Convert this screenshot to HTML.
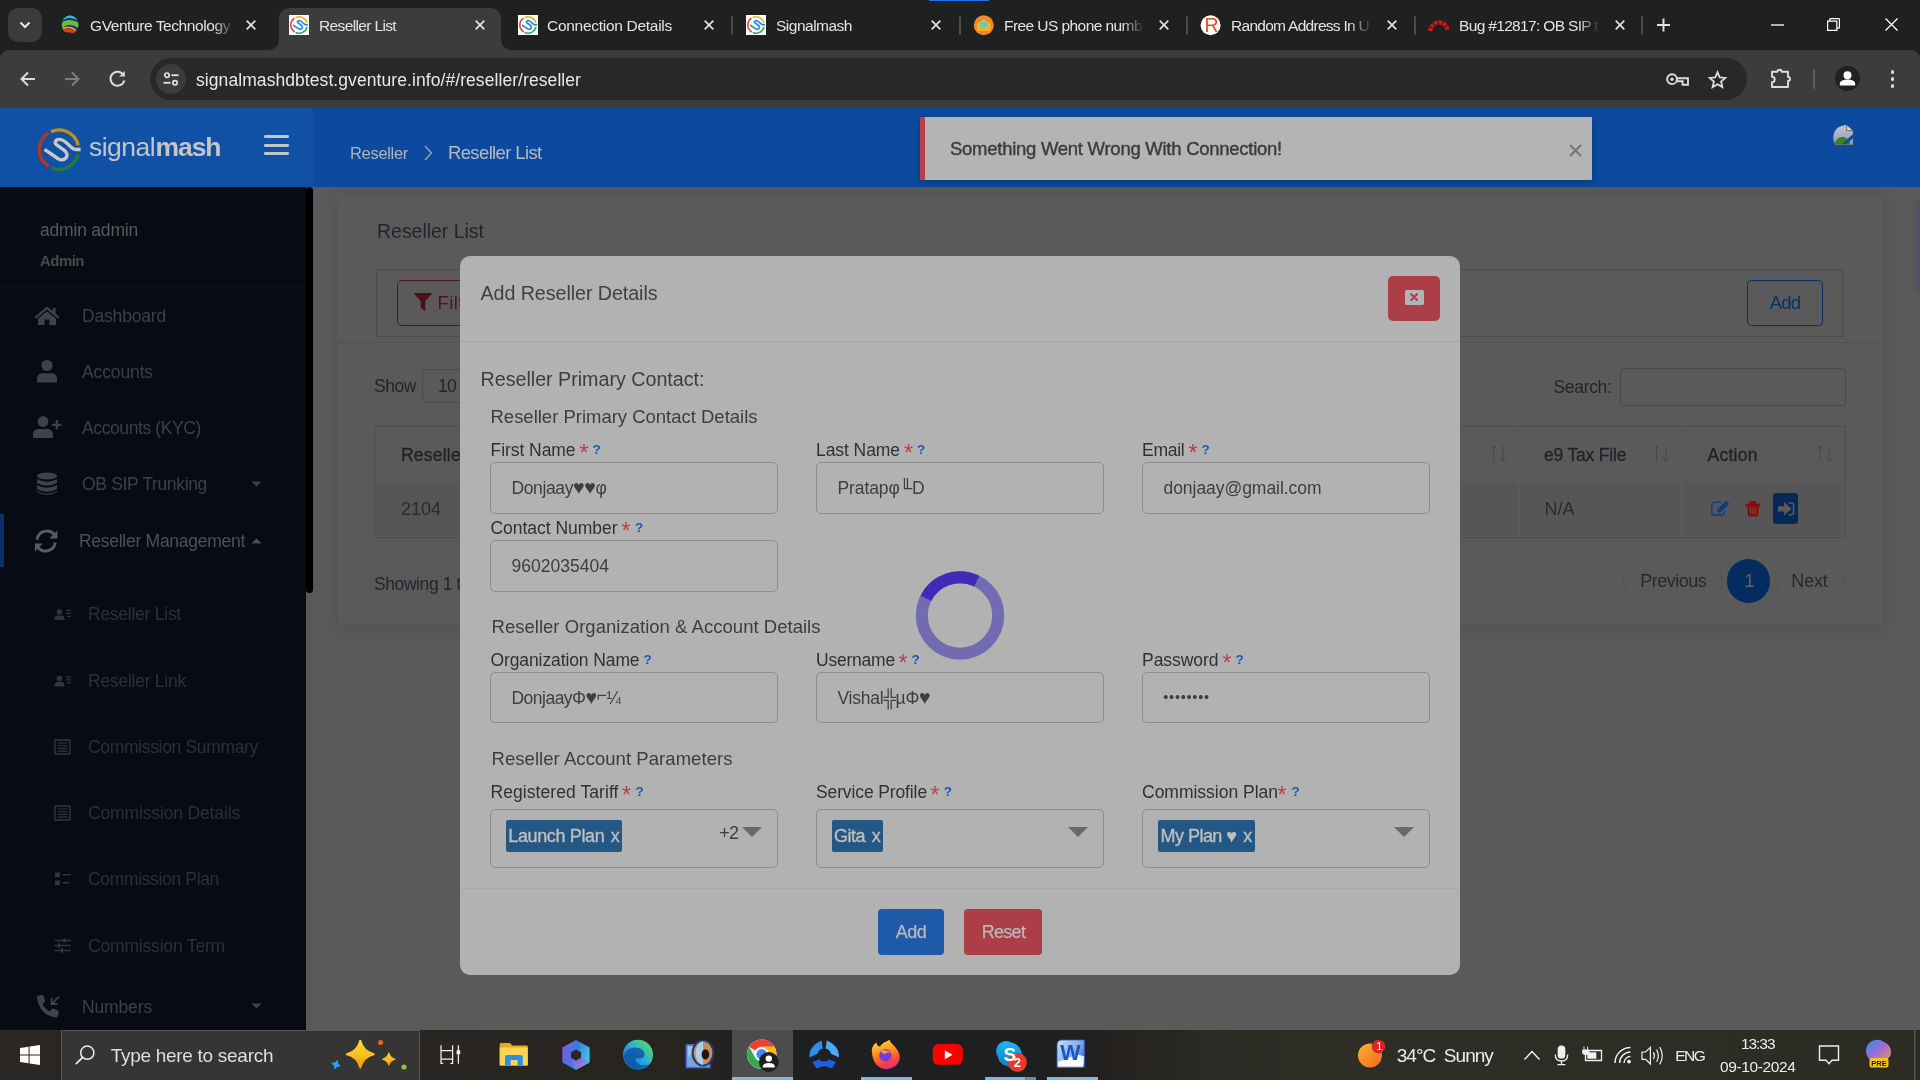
<!DOCTYPE html>
<html lang="en"><head><meta charset="utf-8"><title>Reseller List</title>
<style>
html,body{margin:0;padding:0;}
body{width:1920px;height:1080px;overflow:hidden;position:relative;background:#595959;font-family:"Liberation Sans",sans-serif;}
div,span.t,svg{position:absolute;box-sizing:border-box;}
span.t{white-space:pre;line-height:1;}
svg{overflow:visible;}
#root{left:0;top:0;width:1920px;height:1080px;will-change:transform;}
</style></head>
<body>
<div id="root">
<div style="left:313px;top:187px;width:1607px;height:843px;background:#5a5a5a;"></div>
<div style="left:337px;top:194px;width:1546px;height:431px;background:#5a5a5a;border-radius:3px;box-shadow:0 3px 16px 2px rgba(0,0,0,0.09);"></div>
<span id="t1" class="t" style="left:377px;top:222px;font-size:19.5px;color:#1f242d;letter-spacing:-0.023px;">Reseller List</span>
<div style="left:1918.4px;top:202px;width:4px;height:90px;background:#48526c;border-radius:3px 0 0 3px;box-shadow:0 0 9px 1px rgba(0,0,0,0.14);"></div>
<div style="left:376px;top:269px;width:1467px;height:68px;border:1px solid #4c4c4c;"></div>
<div style="left:397px;top:279.5px;width:120px;height:46.5px;border:1.3px solid #561319;border-radius:5px;"></div>
<svg style="left:414.4px;top:292.9px;" width="18" height="18.2" viewBox="0 0 18 18.2"><path d="M0.4 0 H17.6 Q18.2 0.6 17.6 1.2 L11.3 8 V18.2 L6.6 14.6 V8 L0.4 1.2 Q-0.2 0.6 0.4 0Z" fill="#4e1018"/></svg>
<span id="t2" class="t" style="left:437.4px;top:294px;font-size:18.5px;color:#541219;letter-spacing:0.479px;">Filter</span>
<div style="left:1747px;top:279.8px;width:76.2px;height:46.2px;border:1.3px solid #062f66;border-radius:4.5px;"></div>
<span id="t3" class="t" style="left:1769.7px;top:294px;font-size:18.5px;color:#07306a;letter-spacing:-0.774px;">Add</span>
<div style="left:337px;top:341.5px;width:1546px;height:1px;background:#505050;"></div>
<span id="t4" class="t" style="left:374px;top:378px;font-size:17.5px;color:#1f242d;letter-spacing:-0.445px;">Show</span>
<div style="left:421.5px;top:368.5px;width:90px;height:34px;border:1px solid #4b4b4b;border-radius:4px;"></div>
<span id="t5" class="t" style="left:438px;top:378px;font-size:17.5px;color:#1f242d;letter-spacing:-0.734px;">10</span>
<span id="t6" class="t" style="left:1553.5px;top:379px;font-size:17.5px;color:#1f242d;letter-spacing:-0.330px;">Search:</span>
<div style="left:1620px;top:368px;width:226px;height:38px;border:1px solid #494949;border-radius:4px;"></div>
<div style="left:374px;top:425.5px;width:1472px;height:112px;border:1px solid #4f4f4f;"></div>
<div style="left:376px;top:482px;width:1084px;height:53.5px;background:#565656;"></div>
<div style="left:1460px;top:482px;width:57.5px;height:53.5px;background:#565656;"></div>
<div style="left:1520px;top:482px;width:160px;height:53.5px;background:#565656;"></div>
<div style="left:1682.5px;top:482px;width:161px;height:53.5px;background:#565656;"></div>
<div style="left:1517.3px;top:428px;width:1px;height:52px;background:#565656;"></div>
<div style="left:1680px;top:428px;width:1px;height:52px;background:#565656;"></div>
<span id="t7" class="t" style="left:401px;top:447px;font-size:17.5px;color:#1f2228;letter-spacing:0.225px;-webkit-text-stroke:0.3px #1f2228;">Reseller</span>
<span id="t8" class="t" style="left:1543.9px;top:447px;font-size:17.5px;color:#1f2228;letter-spacing:-0.165px;-webkit-text-stroke:0.3px #1f2228;">e9 Tax File</span>
<span id="t9" class="t" style="left:1707.6px;top:447px;font-size:17.5px;color:#1f2228;letter-spacing:0.227px;-webkit-text-stroke:0.3px #1f2228;">Action</span>
<svg style="left:1490px;top:444.5px;" width="17" height="17" viewBox="0 0 17 17"><path d="M3.6 16.5 V0.8 M0.4 4.4 L3.6 0.8 L6.8 4.4 M13 0.5 V16.2 M9.8 12.6 L13 16.2 L16.2 12.6" stroke="#484848" stroke-width="1" fill="none"/></svg>
<svg style="left:1653.3px;top:444.5px;" width="17" height="17" viewBox="0 0 17 17"><path d="M3.6 16.5 V0.8 M0.4 4.4 L3.6 0.8 L6.8 4.4 M13 0.5 V16.2 M9.8 12.6 L13 16.2 L16.2 12.6" stroke="#484848" stroke-width="1" fill="none"/></svg>
<svg style="left:1816.3px;top:444.5px;" width="17" height="17" viewBox="0 0 17 17"><path d="M3.6 16.5 V0.8 M0.4 4.4 L3.6 0.8 L6.8 4.4 M13 0.5 V16.2 M9.8 12.6 L13 16.2 L16.2 12.6" stroke="#484848" stroke-width="1" fill="none"/></svg>
<span id="t10" class="t" style="left:401px;top:500px;font-size:18px;color:#272b31;letter-spacing:-0.012px;">2104</span>
<span id="t11" class="t" style="left:1544.5px;top:500px;font-size:18px;color:#272b31;letter-spacing:-0.005px;">N/A</span>
<svg style="left:1710.8px;top:500.5px;" width="19" height="15" viewBox="0 0 19 15"><path d="M10.5 1.3 H3.4 Q0.8 1.3 0.8 3.9 V11.4 Q0.8 14 3.4 14 H10.9 Q13.5 14 13.5 11.4 V9.4" stroke="#0e3b86" stroke-width="1.3" fill="none"/><path d="M6.6 8 L14.4 0.6 Q15.4 -0.3 16.5 0.8 L17.4 1.7 Q18.4 2.8 17.5 3.7 L9.7 11.2 L6.2 11.6Z" fill="#0e3b86"/></svg>
<svg style="left:1746px;top:500.6px;" width="14" height="15.6" viewBox="0 0 14 15.6"><path d="M0 3.2 H14 V5 H0Z M4 3.2 V1.6 Q4 0.6 5 0.6 H9 Q10 0.6 10 1.6 V3.2" fill="#8c0b0b" stroke="#8c0b0b" stroke-width="0.9"/><path d="M1.2 5 H12.8 L12.2 14 Q12.1 15.4 10.8 15.4 H3.2 Q1.9 15.4 1.8 14Z" fill="#8c0b0b"/><path d="M4.5 6.6 V13.4 M7 6.6 V13.4 M9.5 6.6 V13.4" stroke="#5c5a5a" stroke-width="1"/></svg>
<div style="left:1773px;top:493px;width:25px;height:31px;background:#06295a;border-radius:3px;"></div>
<svg style="left:1778px;top:501.6px;" width="17" height="13.6" viewBox="0 0 17 13.6"><path d="M0 4.2 H6.2 V0 L13.4 6.8 L6.2 13.6 V9.4 H0Z" fill="#5b5b5b"/><path d="M10.6 0.9 H13.2 Q15.6 0.9 15.6 3.3 V10.3 Q15.6 12.7 13.2 12.7 H10.6" stroke="#5b5b5b" stroke-width="1.5" fill="none"/></svg>
<span id="t12" class="t" style="left:374px;top:576px;font-size:17.5px;color:#1f242d;letter-spacing:-0.416px;">Showing 1 to 1 of 1 entries</span>
<div style="left:1623px;top:559px;width:99px;height:44px;border:1px solid #535656;border-radius:22px;"></div>
<span id="t13" class="t" style="left:1640.2px;top:572px;font-size:18px;color:#25282e;letter-spacing:-0.504px;">Previous</span>
<div style="left:1727px;top:559.3px;width:43.4px;height:43.4px;background:#052c5e;border-radius:50%;"></div>
<span id="t14" class="t" style="left:1744.6px;top:572px;font-size:18px;color:#5d6470;letter-spacing:-1.016px;">1</span>
<div style="left:1775px;top:559px;width:69px;height:44px;border:1px solid #535656;border-radius:22px;"></div>
<span id="t15" class="t" style="left:1791.3px;top:572px;font-size:18px;color:#25282e;letter-spacing:-0.154px;">Next</span>
<div style="left:460px;top:256px;width:1000px;height:719px;background:#b2b2b2;border-radius:10px;"></div>
<span id="t16" class="t" style="left:480.5px;top:284px;font-size:19.7px;color:#3e4146;letter-spacing:-0.069px;">Add Reseller Details</span>
<div style="left:1388px;top:276px;width:52px;height:45px;background:#ab3e46;border-radius:5px;"></div>
<div style="left:1405px;top:289.7px;width:18.7px;height:15.5px;background:#b1b5b5;border-radius:1.6px;"></div>
<svg style="left:1410.2px;top:293.4px;" width="8.2" height="8.2" viewBox="0 0 8.2 8.2"><path d="M1.2 1.2 L7 7 M7 1.2 L1.2 7" stroke="#ab3e46" stroke-width="2.1" stroke-linecap="round"/></svg>
<div style="left:460px;top:340.5px;width:1000px;height:1px;background:#a6a6a6;"></div>
<span id="t17" class="t" style="left:480.5px;top:370px;font-size:19.7px;color:#3a3e43;letter-spacing:-0.012px;">Reseller Primary Contact:</span>
<span id="t18" class="t" style="left:490.5px;top:408px;font-size:18.5px;color:#3a3e43;letter-spacing:-0.010px;">Reseller Primary Contact Details</span>
<span id="t19" class="t" style="left:490.5px;top:442px;font-size:17.5px;color:#2d3237;letter-spacing:-0.056px;">First Name</span>
<span id="t20" class="t" style="left:579.6px;top:442px;font-size:23px;color:#b8404a;">*</span>
<span id="t21" class="t" style="left:592.5px;top:443px;font-size:13.5px;color:#1b58b4;font-weight:bold;">?</span>
<span id="t22" class="t" style="left:816px;top:442px;font-size:17.5px;color:#2d3237;letter-spacing:-0.069px;">Last Name</span>
<span id="t23" class="t" style="left:904.1px;top:442px;font-size:23px;color:#b8404a;">*</span>
<span id="t24" class="t" style="left:917.0px;top:443px;font-size:13.5px;color:#1b58b4;font-weight:bold;">?</span>
<span id="t25" class="t" style="left:1142px;top:442px;font-size:17.5px;color:#2d3237;letter-spacing:-0.253px;">Email</span>
<span id="t26" class="t" style="left:1188.6px;top:442px;font-size:23px;color:#b8404a;">*</span>
<span id="t27" class="t" style="left:1201.5px;top:443px;font-size:13.5px;color:#1b58b4;font-weight:bold;">?</span>
<div style="left:490px;top:462.4px;width:288px;height:52px;border:1px solid #8b8d8f;border-radius:5px;"></div>
<div style="left:816px;top:462.4px;width:288px;height:52px;border:1px solid #8b8d8f;border-radius:5px;"></div>
<div style="left:1142px;top:462.4px;width:288px;height:52px;border:1px solid #8b8d8f;border-radius:5px;"></div>
<span id="t28" class="t" style="left:511.5px;top:480px;font-size:17.5px;color:#3a3f44;letter-spacing:-0.386px;">Donjaay<span style="font-size:1.12em;line-height:0">♥♥</span>φ</span>
<span id="t29" class="t" style="left:837.5px;top:480px;font-size:17.5px;color:#3a3f44;letter-spacing:-0.106px;">Pratapφ╙D</span>
<span id="t30" class="t" style="left:1163.5px;top:480px;font-size:17.5px;color:#3a3f44;letter-spacing:-0.048px;">donjaay@gmail.com</span>
<span id="t31" class="t" style="left:490.5px;top:520px;font-size:17.5px;color:#2d3237;letter-spacing:-0.030px;">Contact Number</span>
<span id="t32" class="t" style="left:621.6px;top:520px;font-size:23px;color:#b8404a;">*</span>
<span id="t33" class="t" style="left:635.0px;top:521px;font-size:13.5px;color:#1b58b4;font-weight:bold;">?</span>
<div style="left:490px;top:540.4px;width:288px;height:51.4px;border:1px solid #8b8d8f;border-radius:5px;"></div>
<span id="t34" class="t" style="left:511.5px;top:558px;font-size:17.5px;color:#3a3f44;letter-spacing:0.017px;">9602035404</span>
<span id="t35" class="t" style="left:491.5px;top:618px;font-size:18.5px;color:#3a3e43;letter-spacing:0.025px;">Reseller Organization &amp; Account Details</span>
<span id="t36" class="t" style="left:490.5px;top:652px;font-size:17.5px;color:#2d3237;letter-spacing:-0.105px;">Organization Name</span>
<span id="t37" class="t" style="left:643.5px;top:653px;font-size:13.5px;color:#1b58b4;font-weight:bold;">?</span>
<span id="t38" class="t" style="left:816px;top:652px;font-size:17.5px;color:#2d3237;letter-spacing:-0.217px;">Username</span>
<span id="t39" class="t" style="left:898.6px;top:652px;font-size:23px;color:#b8404a;">*</span>
<span id="t40" class="t" style="left:911.5px;top:653px;font-size:13.5px;color:#1b58b4;font-weight:bold;">?</span>
<span id="t41" class="t" style="left:1142px;top:652px;font-size:17.5px;color:#2d3237;letter-spacing:-0.043px;">Password</span>
<span id="t42" class="t" style="left:1222.6px;top:652px;font-size:23px;color:#b8404a;">*</span>
<span id="t43" class="t" style="left:1235.5px;top:653px;font-size:13.5px;color:#1b58b4;font-weight:bold;">?</span>
<div style="left:490px;top:672.2px;width:288px;height:51.2px;border:1px solid #8b8d8f;border-radius:5px;"></div>
<div style="left:816px;top:672.2px;width:288px;height:51.2px;border:1px solid #8b8d8f;border-radius:5px;"></div>
<div style="left:1142px;top:672.2px;width:288px;height:51.2px;border:1px solid #8b8d8f;border-radius:5px;"></div>
<span id="t44" class="t" style="left:511.5px;top:690px;font-size:17.5px;color:#3a3f44;letter-spacing:-0.514px;">DonjaayΦ<span style="font-size:1.12em;line-height:0">♥</span><span style="position:relative;top:-3px">⌐</span>¼</span>
<span id="t45" class="t" style="left:837.5px;top:690px;font-size:17.5px;color:#3a3f44;letter-spacing:-0.244px;">Vishal╬µΦ<span style="font-size:1.12em;line-height:0">♥</span></span>
<span id="t46" class="t" style="left:1163.3px;top:690px;font-size:14.5px;color:#3a3f44;letter-spacing:0.734px;">••••••••</span>
<span id="t47" class="t" style="left:491.5px;top:750px;font-size:18.5px;color:#3a3e43;letter-spacing:0.052px;">Reseller Account Parameters</span>
<span id="t48" class="t" style="left:490.5px;top:784px;font-size:17.5px;color:#2d3237;letter-spacing:0.072px;">Registered Tariff</span>
<span id="t49" class="t" style="left:622.1px;top:784px;font-size:23px;color:#b8404a;">*</span>
<span id="t50" class="t" style="left:635.5px;top:785px;font-size:13.5px;color:#1b58b4;font-weight:bold;">?</span>
<span id="t51" class="t" style="left:816px;top:784px;font-size:17.5px;color:#2d3237;letter-spacing:-0.122px;">Service Profile</span>
<span id="t52" class="t" style="left:930.6px;top:784px;font-size:23px;color:#b8404a;">*</span>
<span id="t53" class="t" style="left:943.8px;top:785px;font-size:13.5px;color:#1b58b4;font-weight:bold;">?</span>
<span id="t54" class="t" style="left:1142px;top:784px;font-size:17.5px;color:#2d3237;letter-spacing:-0.010px;">Commission Plan</span>
<span id="t55" class="t" style="left:1277.6px;top:784px;font-size:23px;color:#b8404a;">*</span>
<span id="t56" class="t" style="left:1291.5px;top:785px;font-size:13.5px;color:#1b58b4;font-weight:bold;">?</span>
<div style="left:490px;top:809px;width:288px;height:58.8px;border:1px solid #8b8d8f;border-radius:5px;"></div>
<div style="left:816px;top:809px;width:288px;height:58.8px;border:1px solid #8b8d8f;border-radius:5px;"></div>
<div style="left:1142px;top:809px;width:288px;height:58.8px;border:1px solid #8b8d8f;border-radius:5px;"></div>
<div style="left:505.7px;top:820px;width:116.6px;height:32px;background:#245784;border-radius:2px;"></div>
<span id="t57" class="t" style="left:508.3px;top:827px;font-size:18px;color:#bfbfbf;letter-spacing:-0.372px;-webkit-text-stroke:0.35px #bfbfbf;">Launch Plan</span>
<span id="t58" class="t" style="left:610.7px;top:827px;font-size:18px;color:#bfbfbf;letter-spacing:1.000px;-webkit-text-stroke:0.35px #bfbfbf;">x</span>
<div style="left:831.7px;top:820px;width:51.6px;height:32px;background:#245784;border-radius:2px;"></div>
<span id="t59" class="t" style="left:834px;top:827px;font-size:18px;color:#bfbfbf;letter-spacing:-0.504px;-webkit-text-stroke:0.35px #bfbfbf;">Gita</span>
<span id="t60" class="t" style="left:871.7px;top:827px;font-size:18px;color:#bfbfbf;letter-spacing:1.000px;-webkit-text-stroke:0.35px #bfbfbf;">x</span>
<div style="left:1157.6px;top:820px;width:97.4px;height:32px;background:#245784;border-radius:2px;"></div>
<span id="t61" class="t" style="left:1160.5px;top:827px;font-size:18px;color:#bfbfbf;letter-spacing:-0.524px;-webkit-text-stroke:0.35px #bfbfbf;">My Plan ♥</span>
<span id="t62" class="t" style="left:1243.3px;top:827px;font-size:18px;color:#bfbfbf;letter-spacing:1.000px;-webkit-text-stroke:0.35px #bfbfbf;">x</span>
<span id="t63" class="t" style="left:719.3px;top:824px;font-size:18px;color:#3a3f44;letter-spacing:-0.766px;">+2</span>
<svg style="left:741.7px;top:827.3px;" width="20" height="10" viewBox="0 0 20 10"><path d="M0 0 H20 L10 10Z" fill="#696969"/></svg>
<svg style="left:1068.3px;top:827.3px;" width="20" height="10" viewBox="0 0 20 10"><path d="M0 0 H20 L10 10Z" fill="#696969"/></svg>
<svg style="left:1394px;top:827.3px;" width="20" height="10" viewBox="0 0 20 10"><path d="M0 0 H20 L10 10Z" fill="#696969"/></svg>
<div style="left:460px;top:887.5px;width:1000px;height:1px;background:#a8a8a8;"></div>
<div style="left:878px;top:909px;width:66px;height:46px;background:#1f5aa8;border-radius:4px;"></div>
<span id="t64" class="t" style="left:895.7px;top:923px;font-size:18px;color:#b9b9b9;letter-spacing:-0.510px;-webkit-text-stroke:0.25px #b9b9b9;">Add</span>
<div style="left:964px;top:909px;width:78px;height:46px;background:#ab3e47;border-radius:4px;"></div>
<span id="t65" class="t" style="left:981.7px;top:923px;font-size:18px;color:#b9b9b9;letter-spacing:-0.706px;-webkit-text-stroke:0.25px #b9b9b9;">Reset</span>
<svg style="left:0;top:0" width="1920" height="1080" viewBox="0 0 1920 1080"><circle cx="960" cy="615.5" r="38.2" fill="none" stroke="#726bb1" stroke-width="12"/><path d="M925.96 598.16 A38.2 38.2 0 0 1 976.75 581.17" fill="none" stroke="#3f2bb8" stroke-width="12"/></svg>
<div style="left:0px;top:0px;width:1920px;height:108px;background:#1f2020;"></div>
<div style="left:929px;top:0px;width:60px;height:1px;background:#1a73e8;"></div>
<div style="left:0px;top:50px;width:1920px;height:58px;background:#3c3c3c;border-radius:9px 9px 0 0;"></div>
<div style="left:8px;top:8px;width:34px;height:34px;background:#3a3b3b;border-radius:10px;"></div>
<svg style="left:19px;top:21px;" width="12" height="8" viewBox="0 0 12 8"><path d="M1.5 1.5 L6 6 L10.5 1.5" fill="none" stroke="#e3e3e3" stroke-width="2.2"/></svg>
<div style="left:279px;top:8px;width:222px;height:42px;background:#3c3c3c;border-radius:10px 10px 0 0;"></div>
<svg style="left:269px;top:40px;" width="10" height="10" viewBox="0 0 10 10"><path d="M10 0 V10 H0 A10 10 0 0 0 10 0Z" fill="#3c3c3c"/></svg>
<svg style="left:501px;top:40px;" width="10" height="10" viewBox="0 0 10 10"><path d="M0 0 V10 H10 A10 10 0 0 1 0 0Z" fill="#3c3c3c"/></svg>
<span id="t66" class="t" style="left:90px;top:18px;font-size:15.5px;color:#e3e3e3;letter-spacing:-0.418px;">GVenture Technology</span>
<svg style="left:246px;top:20px;" width="10" height="10" viewBox="0 0 10 10"><path d="M0.7 0.7 L9.3 9.3 M9.3 0.7 L0.7 9.3" stroke="#e3e3e3" stroke-width="1.7" fill="none"/></svg>
<span id="t67" class="t" style="left:319px;top:18px;font-size:15.5px;color:#e3e3e3;letter-spacing:-0.637px;">Reseller List</span>
<svg style="left:475px;top:20px;" width="10" height="10" viewBox="0 0 10 10"><path d="M0.7 0.7 L9.3 9.3 M9.3 0.7 L0.7 9.3" stroke="#e3e3e3" stroke-width="1.7" fill="none"/></svg>
<span id="t68" class="t" style="left:547px;top:18px;font-size:15.5px;color:#e3e3e3;letter-spacing:-0.284px;">Connection Details</span>
<svg style="left:704px;top:20px;" width="10" height="10" viewBox="0 0 10 10"><path d="M0.7 0.7 L9.3 9.3 M9.3 0.7 L0.7 9.3" stroke="#e3e3e3" stroke-width="1.7" fill="none"/></svg>
<span id="t69" class="t" style="left:776px;top:18px;font-size:15.5px;color:#e3e3e3;letter-spacing:-0.500px;">Signalmash</span>
<svg style="left:931px;top:20px;" width="10" height="10" viewBox="0 0 10 10"><path d="M0.7 0.7 L9.3 9.3 M9.3 0.7 L0.7 9.3" stroke="#e3e3e3" stroke-width="1.7" fill="none"/></svg>
<span id="t70" class="t" style="left:1004px;top:18px;font-size:15.5px;color:#e3e3e3;letter-spacing:-0.567px;">Free US phone numb</span>
<svg style="left:1158.5px;top:20px;" width="10" height="10" viewBox="0 0 10 10"><path d="M0.7 0.7 L9.3 9.3 M9.3 0.7 L0.7 9.3" stroke="#e3e3e3" stroke-width="1.7" fill="none"/></svg>
<span id="t71" class="t" style="left:1231px;top:18px;font-size:15.5px;color:#e3e3e3;letter-spacing:-0.718px;">Random Address In U</span>
<svg style="left:1386.5px;top:20px;" width="10" height="10" viewBox="0 0 10 10"><path d="M0.7 0.7 L9.3 9.3 M9.3 0.7 L0.7 9.3" stroke="#e3e3e3" stroke-width="1.7" fill="none"/></svg>
<span id="t72" class="t" style="left:1459px;top:18px;font-size:15.5px;color:#e3e3e3;letter-spacing:-0.662px;">Bug #12817: OB SIP t</span>
<svg style="left:1614.5px;top:20px;" width="10" height="10" viewBox="0 0 10 10"><path d="M0.7 0.7 L9.3 9.3 M9.3 0.7 L0.7 9.3" stroke="#e3e3e3" stroke-width="1.7" fill="none"/></svg>
<div style="left:214px;top:14px;width:20px;height:24px;background:linear-gradient(90deg,rgba(31,32,32,0),#1f2020);"></div>
<div style="left:1122px;top:14px;width:22px;height:24px;background:linear-gradient(90deg,rgba(31,32,32,0),#1f2020);"></div>
<div style="left:1350px;top:14px;width:22px;height:24px;background:linear-gradient(90deg,rgba(31,32,32,0),#1f2020);"></div>
<div style="left:1578px;top:14px;width:22px;height:24px;background:linear-gradient(90deg,rgba(31,32,32,0),#1f2020);"></div>
<div style="left:731px;top:16px;width:2px;height:19px;background:#4a4b4b;border-radius:1px;"></div>
<div style="left:959px;top:16px;width:2px;height:19px;background:#4a4b4b;border-radius:1px;"></div>
<div style="left:1186px;top:16px;width:2px;height:19px;background:#4a4b4b;border-radius:1px;"></div>
<div style="left:1414px;top:16px;width:2px;height:19px;background:#4a4b4b;border-radius:1px;"></div>
<div style="left:1641px;top:16px;width:2px;height:19px;background:#4a4b4b;border-radius:1px;"></div>
<svg style="left:1657px;top:18px;" width="13" height="14" viewBox="0 0 13 14"><path d="M6.5 0.5 V13.5 M0 7 H13" stroke="#e3e3e3" stroke-width="1.9" fill="none"/></svg>
<svg style="left:1771px;top:24px;" width="13" height="2" viewBox="0 0 13 2"><path d="M0 1 H13" stroke="#fff" stroke-width="1.3"/></svg>
<svg style="left:1827px;top:18px;" width="13" height="13" viewBox="0 0 13 13"><path d="M0.6 3.2 H9.8 V12.4 H0.6Z M2.8 3 V0.9 Q2.8 0.6 3.4 0.6 H11.6 Q12.4 0.6 12.4 1.4 V9.6 Q12.4 10.2 11.8 10.2 H10" stroke="#fff" stroke-width="1.2" fill="none"/></svg>
<svg style="left:1885px;top:18px;" width="13" height="13" viewBox="0 0 13 13"><path d="M0.5 0.5 L12.5 12.5 M12.5 0.5 L0.5 12.5" stroke="#fff" stroke-width="1.3" fill="none"/></svg>
<svg style="left:20px;top:71px;" width="16" height="16" viewBox="0 0 16 16"><path d="M15 8 H2 M8 1.5 L1.5 8 L8 14.5" stroke="#dcdcdc" stroke-width="2" fill="none"/></svg>
<svg style="left:64px;top:71px;" width="16" height="16" viewBox="0 0 16 16"><path d="M1 8 H14 M8 1.5 L14.5 8 L8 14.5" stroke="#7d7d7d" stroke-width="2" fill="none"/></svg>
<svg style="left:109px;top:70px;" width="17" height="17" viewBox="0 0 17 17"><path d="M14.6 5.2 A7 7 0 1 0 15.3 10.5" stroke="#dcdcdc" stroke-width="2" fill="none"/><path d="M15.8 1 V6.6 H10.2Z" fill="#dcdcdc"/></svg>
<div style="left:150px;top:58px;width:1597px;height:42px;background:#282828;border-radius:21px;"></div>
<div style="left:156px;top:64px;width:30px;height:30px;background:#3c3c3c;border-radius:15px;"></div>
<svg style="left:163px;top:72px;" width="16" height="14" viewBox="0 0 16 14"><circle cx="4" cy="3.2" r="2.2" fill="none" stroke="#e3e3e3" stroke-width="1.7"/><path d="M8.5 3.2 H15.5" stroke="#e3e3e3" stroke-width="1.8"/><circle cx="12" cy="10.8" r="2.2" fill="none" stroke="#e3e3e3" stroke-width="1.7"/><path d="M0.5 10.8 H7.5" stroke="#e3e3e3" stroke-width="1.8"/></svg>
<span id="t73" class="t" style="left:196px;top:72px;font-size:17.5px;color:#e8e8e8;letter-spacing:0.074px;">signalmashdbtest.gventure.info/#/reseller/reseller</span>
<svg style="left:1666px;top:73px;" width="23" height="13" viewBox="0 0 23 13"><circle cx="6" cy="6.2" r="4.9" fill="none" stroke="#dcdcdc" stroke-width="1.9"/><circle cx="6" cy="6.2" r="1.7" fill="#dcdcdc"/><path d="M10.8 5.2 H22 V11.8 H16.6 V8.2 H11" fill="none" stroke="#dcdcdc" stroke-width="1.9"/></svg>
<svg style="left:1708px;top:70px;" width="19" height="19" viewBox="0 0 19 19"><path d="M9.5 2.2 L11.7 7.4 L17.3 7.9 L13.1 11.6 L14.4 17.1 L9.5 14.2 L4.6 17.1 L5.9 11.6 L1.7 7.9 L7.3 7.4Z" fill="none" stroke="#dcdcdc" stroke-width="1.8" stroke-linejoin="miter"/></svg>
<svg style="left:1770px;top:67px;" width="22" height="22" viewBox="0 0 22 22"><path d="M2 4.8 H7.4 A2.1 2.1 0 0 1 11.6 4.8 H18 V10 A2 2 0 0 1 18 14 V20 H2 V15.2 A2.7 2.7 0 0 0 2 9.8Z" fill="none" stroke="#dcdcdc" stroke-width="1.9" stroke-linejoin="round"/></svg>
<div style="left:1813px;top:69px;width:2px;height:20px;background:#5e5e5e;border-radius:1px;"></div>
<div style="left:1835px;top:66px;width:25px;height:25px;background:#1f2020;border-radius:50%;"></div>
<svg style="left:1835px;top:66px;" width="25" height="25" viewBox="0 0 25 25"><circle cx="12.5" cy="9.2" r="4" fill="#fff"/><path d="M4.8 19.6 V17.8 C4.8 14.6 9 13.6 12.5 13.6 C16 13.6 20.2 14.6 20.2 17.8 V19.6Z" fill="#fff"/></svg>
<div style="left:1890.7px;top:70.1px;width:3.8px;height:3.8px;background:#dcdcdc;border-radius:50%;"></div>
<div style="left:1890.7px;top:77.1px;width:3.8px;height:3.8px;background:#dcdcdc;border-radius:50%;"></div>
<div style="left:1890.7px;top:83.89999999999999px;width:3.8px;height:3.8px;background:#dcdcdc;border-radius:50%;"></div>
<svg style="left:0;top:0" width="1920" height="50" viewBox="0 0 1920 50"><rect x="289" y="15" width="20" height="20" fill="#fff"/><path d="M294.65 31.95 A8.2 8.2 0 0 1 294.53 18.12" stroke="#e0452f" stroke-width="1.6" fill="none"/><path d="M295.66 17.51 A8.2 8.2 0 0 1 306.99 23.16" stroke="#efb41f" stroke-width="1.6" fill="none"/><path d="M306.96 26.98 A8.2 8.2 0 0 1 295.66 32.49" stroke="#34a853" stroke-width="1.6" fill="none"/><path d="M292.96 24.88 L297.75 28.16 C299.00 29.16 300.66 29.66 301.75 28.58 C302.75 27.50 302.50 26.25 301.25 25.25 L298.17 23.09 C296.92 22.09 297.34 20.84 299.00 20.71 C300.25 20.63 301.08 21.25 302.33 22.34 C303.58 23.42 304.41 24.88 306.08 24.88 H307.99" stroke="#2b8fe0" stroke-width="1.8" fill="none" stroke-linejoin="round"/><rect x="518" y="15" width="20" height="20" fill="#fff"/><path d="M523.65 31.95 A8.2 8.2 0 0 1 523.53 18.12" stroke="#e0452f" stroke-width="1.6" fill="none"/><path d="M524.66 17.51 A8.2 8.2 0 0 1 535.99 23.16" stroke="#efb41f" stroke-width="1.6" fill="none"/><path d="M535.96 26.98 A8.2 8.2 0 0 1 524.66 32.49" stroke="#34a853" stroke-width="1.6" fill="none"/><path d="M521.96 24.88 L526.75 28.16 C528.00 29.16 529.66 29.66 530.75 28.58 C531.75 27.50 531.50 26.25 530.25 25.25 L527.17 23.09 C525.92 22.09 526.34 20.84 528.00 20.71 C529.25 20.63 530.08 21.25 531.33 22.34 C532.58 23.42 533.41 24.88 535.08 24.88 H536.99" stroke="#2b8fe0" stroke-width="1.8" fill="none" stroke-linejoin="round"/><rect x="746" y="15" width="20" height="20" fill="#fff"/><path d="M751.65 31.95 A8.2 8.2 0 0 1 751.53 18.12" stroke="#e0452f" stroke-width="1.6" fill="none"/><path d="M752.66 17.51 A8.2 8.2 0 0 1 763.99 23.16" stroke="#efb41f" stroke-width="1.6" fill="none"/><path d="M763.96 26.98 A8.2 8.2 0 0 1 752.66 32.49" stroke="#34a853" stroke-width="1.6" fill="none"/><path d="M749.96 24.88 L754.75 28.16 C756.00 29.16 757.66 29.66 758.75 28.58 C759.75 27.50 759.50 26.25 758.25 25.25 L755.17 23.09 C753.92 22.09 754.34 20.84 756.00 20.71 C757.25 20.63 758.08 21.25 759.33 22.34 C760.58 23.42 761.41 24.88 763.08 24.88 H764.99" stroke="#2b8fe0" stroke-width="1.8" fill="none" stroke-linejoin="round"/><defs><clipPath id="gvc"><ellipse cx="70.1" cy="24.8" rx="8.4" ry="9.2"/></clipPath></defs><g clip-path="url(#gvc)"><rect x="60" y="14" width="20" height="22" fill="#1c2f5e"/><path d="M60 21.5 C64 16.5 71 14.5 79 19.5" fill="none" stroke="#35b6e4" stroke-width="2.6"/><path d="M62 18 C66 15 70 14.6 74 15.6" fill="none" stroke="#7fd4f0" stroke-width="1.4"/><path d="M60 28 C64 21.5 72 20.5 80 26.5" fill="none" stroke="#6cba3c" stroke-width="5"/><path d="M60.5 31.2 C65 26.2 71 26.2 76 30.4" fill="none" stroke="#f2a81e" stroke-width="1.5"/><path d="M61 34.5 C65 28.8 71 28.8 76.5 34.5" fill="none" stroke="#e63a1c" stroke-width="3.6"/></g><circle cx="983.8" cy="25.3" r="10" fill="#f08a2a"/><path d="M977.4 24 L983.8 19.4 L990.2 24 V30.6 H977.4Z" fill="#f8c63c"/><path d="M979.6 21.2 H988 V26 L983.8 28.6 L979.6 26Z" fill="#5fd0b4"/><path d="M977.4 24.4 L983.8 28.8 L990.2 24.4 V30.6 H977.4Z" fill="#f2b02c"/><circle cx="1210.6" cy="25.3" r="10" fill="#fff"/><path d="M1430.4 31 A8.6 8.6 0 0 1 1447.6 31" fill="none" stroke="#d8141c" stroke-width="4.2" stroke-dasharray="3.4 1.1" stroke-dashoffset="0.3"/></svg>
<span id="t74" class="t" style="left:1204.6px;top:16px;font-size:19.5px;color:#e8501e;">R</span>
<div style="left:0px;top:108px;width:1920px;height:79px;background:#0c4a9f;"></div>
<div style="left:0px;top:108px;width:313px;height:79px;background:#1051a6;"></div>
<svg style="left:0;top:0" width="313" height="200" viewBox="0 0 313 200"><path d="M48.56 166.41 A19.7 19.7 0 0 1 48.27 133.18" stroke="#b03a22" stroke-width="3.3" fill="none"/><path d="M50.99 131.70 A19.7 19.7 0 0 1 78.20 145.27" stroke="#c48f14" stroke-width="3.3" fill="none"/><path d="M78.11 154.47 A19.7 19.7 0 0 1 50.99 167.70" stroke="#1f7d3a" stroke-width="3.3" fill="none"/><path d="M44.50 149.40 L56.00 157.30 C59.00 159.70 63.00 160.90 65.60 158.30 C68.00 155.70 67.40 152.70 64.40 150.30 L57.00 145.10 C54.00 142.70 55.00 139.70 59.00 139.40 C62.00 139.20 64.00 140.70 67.00 143.30 C70.00 145.90 72.00 149.40 76.00 149.40 H80.60" stroke="#c8c8c8" stroke-width="3.465" fill="none" stroke-linejoin="round"/></svg>
<span id="t75" class="t" style="left:89px;top:134px;font-size:26.5px;color:#c4c5c7;letter-spacing:-0.542px;">signal</span>
<span id="t76" class="t" style="left:155.5px;top:134px;font-size:26.5px;color:#c4c5c7;font-weight:bold;letter-spacing:-1.059px;">mash</span>
<div style="left:264px;top:135.2px;width:25px;height:2.8px;background:#c4c5c7;border-radius:1.3px;"></div>
<div style="left:264px;top:143.8px;width:25px;height:2.8px;background:#c4c5c7;border-radius:1.3px;"></div>
<div style="left:264px;top:152.4px;width:25px;height:2.8px;background:#c4c5c7;border-radius:1.3px;"></div>
<span id="t77" class="t" style="left:350px;top:145px;font-size:16.5px;color:#b2b3b6;letter-spacing:-0.316px;">Reseller</span>
<svg style="left:424px;top:145px;" width="8" height="16" viewBox="0 0 8 16"><path d="M1 1 L7.5 8 L1 15" stroke="#aaa8b2" stroke-width="1.25" fill="none"/></svg>
<span id="t78" class="t" style="left:448px;top:144px;font-size:18.5px;color:#b9b9bb;letter-spacing:-0.638px;">Reseller List</span>
<svg style="left:0;top:0" width="1920" height="190" viewBox="0 0 1920 190"><defs><clipPath id="bic"><path d="M1835.6 144.8 C1832 140 1832.4 131 1839 127 C1842 125.4 1845 125 1846.6 125 L1852.9 130.6 V144.8Z"/></clipPath><linearGradient id="big" x1="0" y1="0" x2="0" y2="1"><stop offset="0" stop-color="#c2c5c8"/><stop offset="0.45" stop-color="#a9b2c4"/><stop offset="1" stop-color="#8f9bb6"/></linearGradient></defs><g clip-path="url(#bic)"><rect x="1832" y="124" width="22" height="22" fill="url(#big)"/><circle cx="1842" cy="1146" r="0" fill="none"/><ellipse cx="1842.4" cy="145.6" rx="8.2" ry="8.8" fill="#3f7f28"/><path d="M1846.6 125 V130.6 H1852.9Z" fill="#d8d8d8" stroke="#666" stroke-width="0.9"/><path d="M1853.6 133.4 L1840.4 145.6 L1844.8 145.6 L1853.6 137.6Z" fill="#0c4a9f"/><path d="M1835 144.6 H1853" stroke="#8a7a62" stroke-width="0.8"/></g></svg>
<div style="left:0px;top:187px;width:306px;height:843px;background:#080b14;"></div>
<div style="left:306px;top:187px;width:7px;height:406px;background:#000;border-radius:3.5px;"></div>
<span id="t79" class="t" style="left:40px;top:222px;font-size:17.5px;color:#5a5a5c;letter-spacing:-0.200px;">admin admin</span>
<span id="t80" class="t" style="left:40px;top:253px;font-size:15px;color:#49494b;font-weight:bold;letter-spacing:-0.534px;">Admin</span>
<div style="left:0px;top:287px;width:306px;height:1px;background:#0d111b;"></div>
<div style="left:0px;top:514px;width:4px;height:53px;background:#0a3069;"></div>
<span id="t81" class="t" style="left:82px;top:308px;font-size:17.5px;color:#3e4044;letter-spacing:-0.181px;">Dashboard</span>
<span id="t82" class="t" style="left:82px;top:364px;font-size:17.5px;color:#3e4044;letter-spacing:-0.123px;">Accounts</span>
<span id="t83" class="t" style="left:82px;top:420px;font-size:17.5px;color:#3e4044;letter-spacing:-0.392px;">Accounts (KYC)</span>
<span id="t84" class="t" style="left:82px;top:476px;font-size:17.5px;color:#3e4044;letter-spacing:-0.335px;">OB SIP Trunking</span>
<span id="t85" class="t" style="left:79px;top:533px;font-size:17.5px;color:#4e5053;letter-spacing:-0.274px;">Reseller Management</span>
<span id="t86" class="t" style="left:88px;top:606px;font-size:17.5px;color:#2e3034;letter-spacing:-0.254px;">Reseller List</span>
<span id="t87" class="t" style="left:88px;top:673px;font-size:17.5px;color:#2e3034;letter-spacing:-0.243px;">Reseller Link</span>
<span id="t88" class="t" style="left:88px;top:739px;font-size:17.5px;color:#2e3034;letter-spacing:-0.333px;">Commission Summary</span>
<span id="t89" class="t" style="left:88px;top:805px;font-size:17.5px;color:#2e3034;letter-spacing:-0.146px;">Commission Details</span>
<span id="t90" class="t" style="left:88px;top:871px;font-size:17.5px;color:#2e3034;letter-spacing:-0.344px;">Commission Plan</span>
<span id="t91" class="t" style="left:88px;top:938px;font-size:17.5px;color:#2e3034;letter-spacing:-0.180px;">Commission Term</span>
<span id="t92" class="t" style="left:82px;top:999px;font-size:17.5px;color:#3e4044;letter-spacing:-0.143px;">Numbers</span>
<svg style="left:251px;top:481px;" width="12" height="6" viewBox="0 0 12 6"><path d="M0.5 0.5 H10.5 L5.5 5.5Z" fill="#3e4044"/></svg>
<svg style="left:251px;top:538px;" width="12" height="6" viewBox="0 0 12 6"><path d="M0.5 5.5 H10.5 L5.5 0.5Z" fill="#4e5053"/></svg>
<svg style="left:251px;top:1003px;" width="12" height="6" viewBox="0 0 12 6"><path d="M0.5 0.5 H10.5 L5.5 5.5Z" fill="#3e4044"/></svg>
<svg style="left:0;top:0" width="313" height="1030" viewBox="0 0 313 1030"><path d="M47 306.5 L34.5 317 L36 318.8 L47 309.6 L58 318.8 L59.5 317 L55.5 313.6 V308 H52.8 V311.3Z" fill="#3f4246"/><path d="M47 311.3 L38 318.8 V325 H44.6 V319.6 H49.4 V325 H56 V318.8Z" fill="#3f4246"/><circle cx="47" cy="365.5" r="5.6" fill="#3f4246"/><path d="M37 382.6 V379 Q37 373.2 43 373.2 H51 Q57 373.2 57 379 V382.6Z" fill="#3f4246"/><circle cx="43" cy="421.5" r="5.4" fill="#3f4246"/><path d="M33 438 V434.6 Q33 429 39 429 H47 Q53 429 53 434.6 V438Z" fill="#3f4246"/><path d="M56.8 420 V429.6 M52 424.8 H61.6" stroke="#3f4246" stroke-width="2.2"/><ellipse cx="47" cy="476" rx="10" ry="3.4" fill="#3f4246"/><path d="M37 479 Q47 484.6 57 479 V483 Q47 488.6 37 483Z M37 485 Q47 490.6 57 485 V489 Q47 494.6 37 489Z M37 491 Q47 496.6 57 491 V492 Q47 498 37 492Z" fill="#3f4246"/><path d="M37 539.5 A10 10 0 0 1 54.5 534.5" fill="none" stroke="#595b5e" stroke-width="3"/><path d="M57.4 530.4 V538.4 H49.4Z" fill="#595b5e"/><path d="M55.3 542.5 A10 10 0 0 1 37.8 547.5" fill="none" stroke="#595b5e" stroke-width="3"/><path d="M34.9 551.6 V543.6 H42.9Z" fill="#595b5e"/><circle cx="59.5" cy="612.0" r="2.8" fill="#34373a"/><path d="M54.6 620.0 V618.5 Q54.6 615.5 57.6 615.5 H61.4 Q64.4 615.5 64.4 618.5 V620.0Z" fill="#34373a"/><path d="M66 610.3 H71 M66 613.3 H71 M67 616.3 H71" stroke="#34373a" stroke-width="1.2"/><circle cx="59.5" cy="678.5" r="2.8" fill="#34373a"/><path d="M54.6 686.5 V685 Q54.6 682 57.6 682 H61.4 Q64.4 682 64.4 685 V686.5Z" fill="#34373a"/><path d="M66 676.8 H71 M66 679.8 H71 M67 682.8 H71" stroke="#34373a" stroke-width="1.2"/><path d="M55 740 H70 V754 H55Z" fill="none" stroke="#34373a" stroke-width="1.3"/><path d="M57.5 743 H67.5 M57.5 745.7 H67.5 M57.5 748.4 H67.5 M57.5 751.1 H67.5" stroke="#34373a" stroke-width="1.1"/><path d="M55 806 H70 V820 H55Z" fill="none" stroke="#34373a" stroke-width="1.3"/><path d="M57.5 809 H67.5 M57.5 811.7 H67.5 M57.5 814.4 H67.5 M57.5 817.1 H67.5" stroke="#34373a" stroke-width="1.1"/><path d="M55 872.5 H60 V877 H55Z M55 880.5 H60 V885 H55Z" fill="#34373a"/><path d="M62.5 874.8 H71 M62.5 882.8 H69" stroke="#34373a" stroke-width="1.6"/><path d="M54.5 940.5 H71 M54.5 945.5 H71 M54.5 950.5 H71" stroke="#34373a" stroke-width="1.6"/><path d="M64.5 938.3 V942.7 M59 943.3 V947.7 M62 948.3 V952.7" stroke="#34373a" stroke-width="2"/><path d="M37 998 Q36 996.5 37.6 996 L41.6 995 Q42.8 994.8 43.3 996 L45.2 1000.4 Q45.6 1001.4 44.8 1002.1 L42.4 1004 Q44.8 1009 49.8 1011.4 L51.7 1009 Q52.4 1008.2 53.4 1008.6 L57.8 1010.5 Q59 1011 58.8 1012.2 L57.8 1016.2 Q57.4 1017.6 56 1017.4 Q40 1015.6 37 998Z" fill="#3f4246"/><path d="M59 996.6 L52 1003.6 M51.6 998 V1004 H57.6" stroke="#3f4246" stroke-width="1.9" fill="none"/></svg>
<div style="left:919.5px;top:117px;width:672.5px;height:63px;background:#b4b4b4;border-left:5.5px solid #b8404a;box-shadow:0 2px 6px rgba(0,0,0,0.25);border-radius:1px;"></div>
<span id="t93" class="t" style="left:950px;top:140px;font-size:18.5px;color:#393c41;letter-spacing:-0.264px;-webkit-text-stroke:0.4px #393c41;">Something Went Wrong With Connection!</span>
<svg style="left:1569px;top:143.5px;" width="13" height="13" viewBox="0 0 13 13"><path d="M1 1 L12 12 M12 1 L1 12" stroke="#757575" stroke-width="2" fill="none"/></svg>
<div style="left:0px;top:1030px;width:1920px;height:50px;background:linear-gradient(90deg,#2b2724 0%,#2a2623 22%,#27231f 36%,#1f2022 41%,#1e1f21 54%,#25221f 58%,#2b2a24 63%,#2e2e26 70%,#2c2c25 100%);"></div>
<svg style="left:20px;top:1045px;" width="20" height="20" viewBox="0 0 20 20"><path d="M0 2.9 L8.6 1.7 V9.5 H0Z M9.6 1.55 L20 0 V9.5 H9.6Z M0 10.5 H8.6 V18.3 L0 17.1Z M9.6 10.5 H20 V20 L9.6 18.45Z" fill="#fff"/></svg>
<div style="left:60.5px;top:1030px;width:359px;height:51px;background:#353535;border:1px solid #565656;"></div>
<svg style="left:75px;top:1045px;" width="20" height="20" viewBox="0 0 20 20"><circle cx="12.3" cy="7.7" r="6.6" fill="none" stroke="#e8e8e8" stroke-width="1.5"/><path d="M7.6 12.4 L0.8 19.2" stroke="#e8e8e8" stroke-width="1.7"/></svg>
<span id="t94" class="t" style="left:110.7px;top:1046px;font-size:19px;color:#dedede;letter-spacing:-0.286px;">Type here to search</span>
<svg style="left:0;top:0" width="1920" height="1080" viewBox="0 0 1920 1080"><defs><linearGradient id="gs" x1="0" y1="0" x2="0" y2="1"><stop offset="0" stop-color="#ffd43a"/><stop offset="0.55" stop-color="#fbbf1d"/><stop offset="1" stop-color="#ee9612"/></linearGradient></defs><path d="M360.3 1040.8 C362.1425 1048.304 366.196 1052.3575 373.7 1054.2 C366.196 1056.0425 362.1425 1060.096 360.3 1067.6000000000001 C358.45750000000004 1060.096 354.404 1056.0425 346.90000000000003 1054.2 C354.404 1052.3575 358.45750000000004 1048.304 360.3 1040.8Z" fill="url(#gs)" stroke="url(#gs)" stroke-width="2.14" stroke-linejoin="round"/><path d="M388.8 1052.9 C389.66625 1056.428 391.572 1058.33375 395.1 1059.2 C391.572 1060.06625 389.66625 1061.972 388.8 1065.5 C387.93375000000003 1061.972 386.028 1060.06625 382.5 1059.2 C386.028 1058.33375 387.93375000000003 1056.428 388.8 1052.9Z" fill="url(#gs)" stroke="url(#gs)" stroke-width="1.01" stroke-linejoin="round"/><path d="M336 1060.1000000000001 C336.6325 1062.6760000000002 338.024 1064.0675 340.6 1064.7 C338.024 1065.3325 336.6325 1066.724 336 1069.3 C335.3675 1066.724 333.976 1065.3325 331.4 1064.7 C333.976 1064.0675 335.3675 1062.6760000000002 336 1060.1000000000001Z" fill="#2aa4f4" stroke="#2aa4f4" stroke-width="0.74" stroke-linejoin="round" transform="rotate(18 336 1064.7)"/><circle cx="380.6" cy="1042.5" r="2.6" fill="#ea5e28"/><circle cx="404" cy="1067" r="2.6" fill="#8cc63f"/></svg>
<svg style="left:440px;top:1045px;" width="21" height="20" viewBox="0 0 21 20"><path d="M1 0.2 V18.8 M12.6 0.2 V18.8 M1 5.6 H12.6 M1 14 H12.6 M0.4 18.4 H3.2 M10.4 18.4 H13.2" stroke="#f0f0f0" stroke-width="1.25" fill="none"/><path d="M18.4 0.2 V5.2 M18.4 9.6 V18.8" stroke="#f0f0f0" stroke-width="1.25"/><rect x="16.6" y="5.2" width="3.6" height="4.2" fill="#f0f0f0"/></svg>
<svg style="left:0;top:0" width="1920" height="1080" viewBox="0 0 1920 1080"><defs><linearGradient id="gcp" x1="0" y1="0.2" x2="1" y2="0.6"><stop offset="0" stop-color="#8a5ae0"/><stop offset="0.45" stop-color="#3a78e0"/><stop offset="1" stop-color="#38c8e8"/></linearGradient><linearGradient id="gcp2" x1="0" y1="0" x2="1" y2="1"><stop offset="0" stop-color="#5a4ad0"/><stop offset="1" stop-color="#c07ae8"/></linearGradient><linearGradient id="ged" x1="0.1" y1="0.9" x2="0.9" y2="0.1"><stop offset="0" stop-color="#1565c0"/><stop offset="0.5" stop-color="#2aa8e0"/><stop offset="1" stop-color="#58dc64"/></linearGradient><linearGradient id="gff" x1="0.3" y1="0" x2="0.6" y2="1"><stop offset="0" stop-color="#ffd83a"/><stop offset="0.45" stop-color="#ff8a1c"/><stop offset="0.8" stop-color="#f8403c"/><stop offset="1" stop-color="#e0309a"/></linearGradient><linearGradient id="gsun" x1="0" y1="0" x2="1" y2="1"><stop offset="0" stop-color="#fdb62c"/><stop offset="1" stop-color="#f0641e"/></linearGradient><linearGradient id="gcop" x1="0" y1="0" x2="1" y2="1"><stop offset="0" stop-color="#2f8ee8"/><stop offset="0.5" stop-color="#a26ad8"/><stop offset="1" stop-color="#f0a040"/></linearGradient><linearGradient id="gsk" x1="0" y1="0" x2="0" y2="1"><stop offset="0" stop-color="#1fb4ec"/><stop offset="1" stop-color="#0c7fd0"/></linearGradient><linearGradient id="gwd" x1="0" y1="0" x2="1" y2="0.6"><stop offset="0" stop-color="#c4dcf8"/><stop offset="0.6" stop-color="#8fb4ec"/><stop offset="1" stop-color="#4a78d0"/></linearGradient></defs><rect x="732" y="1030" width="61" height="50" fill="#4c4c4c"/><path d="M499.7 1044.2 Q499.7 1043 501 1043 H510 L512.4 1045.4 H526.4 Q527.8 1045.4 527.8 1046.8 V1065.6 H499.7Z" fill="#e9a91f"/><path d="M499.7 1047.6 H527.8 V1064.4 Q527.8 1065.6 526.6 1065.6 H500.9 Q499.7 1065.6 499.7 1064.4Z" fill="#f9d457"/><path d="M505 1065.6 V1057.4 Q505 1055 507.4 1055 H520.4 Q522.8 1055 522.8 1057.4 V1065.6 H517.6 V1060 H510.6 V1065.6Z" fill="#2d8ee4"/><path d="M576 1041 L588.6 1048 V1062 L576 1069 L563.4 1062 V1048Z" fill="url(#gcp)" stroke="url(#gcp)" stroke-width="2" stroke-linejoin="round"/><path d="M563.4 1050 L576 1069 L588.6 1062 L582 1058 L576 1061.4 L570 1058 Z" fill="url(#gcp2)" opacity="0.9"/><path d="M576 1049.4 L581 1052.2 V1057.8 L576 1060.6 L571 1057.8 V1052.2Z" fill="#2a2624"/><circle cx="638" cy="1054.7" r="15" fill="url(#ged)"/><path d="M624 1058 C624 1049 633 1045.5 640 1048.5 C645.5 1051 646 1057 641.5 1058.5 H635.5 C635.5 1063.5 641 1067 648.5 1064.5 C643 1071.5 628 1070.5 624 1058Z" fill="#0f55a8" opacity="0.85"/><rect x="685.6" y="1044" width="25" height="24.3" fill="#4a68d4"/><rect x="687.4" y="1045.8" width="21.4" height="20.7" fill="#9cc4e8"/><path d="M687.4 1058 L694 1052 L700 1058 V1066.5 H687.4Z" fill="#78a8dc"/><ellipse cx="703" cy="1053" rx="10.4" ry="12.6" fill="#c89058" stroke="#1c3a7c" stroke-width="2"/><path d="M703 1041 A10.4 12.6 0 0 0 703 1065.2Z" fill="#a8d0ec"/><ellipse cx="705.4" cy="1054.4" rx="3.8" ry="5.2" fill="#24140c"/><circle cx="761.7" cy="1054.2" r="14.8" fill="#e8eaed"/><path d="M761.7 1039.4 A14.8 14.8 0 0 1 774.5 1046.8 H761.7 A7.4 7.4 0 0 0 755.3 1050.5 L748.9 1046.8 A14.8 14.8 0 0 1 761.7 1039.4Z" fill="#ea4335"/><path d="M774.5 1046.8 A14.8 14.8 0 0 1 761.7 1069 L768.1 1057.9 A7.4 7.4 0 0 0 768.1 1050.5 L761.7 1046.8Z" fill="#fbbc04"/><path d="M761.7 1069 A14.8 14.8 0 0 1 748.9 1046.8 L755.3 1057.9 A7.4 7.4 0 0 0 768.1 1057.9Z" fill="#34a853"/><circle cx="761.7" cy="1054.2" r="6.7" fill="#fff"/><circle cx="761.7" cy="1054.2" r="5.3" fill="#4285f4"/><circle cx="768.8" cy="1062" r="9.9" fill="#1f1f1f"/><circle cx="768.8" cy="1058.6" r="3.2" fill="#fff"/><path d="M762.6 1067.4 Q762.6 1063 768.8 1063 Q775 1063 775 1067.4Z" fill="#fff"/><path d="M821.6 1040.4 L822.8 1048.6 Q818.6 1049.4 817.4 1053.8 L809.6 1057.6 Q808.4 1046.4 821.6 1040.4Z" fill="#2d8fea"/><path d="M826.8 1040.4 Q840 1046.4 838.8 1057.6 L831 1053.8 Q829.8 1049.4 825.6 1048.6Z" fill="#4aaaf4"/><path d="M812.4 1062 L819 1059.6 Q824.2 1063.4 829.4 1059.6 L836 1062 L832 1068.4 L824.2 1066 L816.4 1068.4Z" fill="#1f5fe4"/><path d="M872 1053 C871 1047.5 874 1044 876.5 1042.5 C876.5 1045 878 1046.5 880 1046.5 C883 1042 887 1041.5 889.8 1039.8 C890 1043 893.5 1044.5 896 1048 C899 1052 900.5 1056 899.5 1060 C897.5 1066 892 1069 886 1069 C878 1069 872.6 1062 872 1053Z" fill="url(#gff)"/><circle cx="885.4" cy="1055.4" r="6.2" fill="#7a3ae0"/><path d="M880 1051 C883 1049.5 888 1050 890.5 1053 C888 1052.4 885.6 1053 884.4 1054.4 C883 1053 881.4 1052 880 1051Z" fill="#ff9a1c"/><rect x="932.8" y="1044" width="30" height="20.8" rx="5.6" fill="#ff0000"/><path d="M944.8 1050.4 L952.6 1054.8 L944.8 1059.2Z" fill="#fff"/><circle cx="1006" cy="1051" r="10" fill="url(#gsk)"/><circle cx="1013.4" cy="1058.6" r="9.8" fill="url(#gsk)"/><circle cx="1009.6" cy="1054.6" r="12" fill="url(#gsk)"/><circle cx="1017.5" cy="1062.5" r="9.4" fill="#e8392c"/><path d="M1057 1045 Q1057 1040 1062 1040 H1084.4 V1067.2 H1057Z" fill="url(#gwd)"/><path d="M1057.8 1062 L1078 1054.5 L1084.4 1056.4 L1083 1067.2 H1057.8Z" fill="#fbfcfe"/><path d="M1080.6 1056 L1084.8 1057.4 L1083.2 1065Z" fill="#e8ecf4"/><path d="M1057 1045 Q1057 1040 1062 1040 H1084.4 V1067.2 H1057Z" fill="none" stroke="#2f5cc0" stroke-width="0.8"/><rect x="732" y="1077" width="61" height="3" fill="#76b9ed"/><rect x="861" y="1077" width="51" height="3" fill="#76b9ed"/><rect x="985.2" y="1077" width="40" height="3" fill="#76b9ed"/><rect x="1025.2" y="1077" width="10.8" height="3" fill="#5a90ba"/><rect x="1046.9" y="1077" width="51.1" height="3" fill="#76b9ed"/><circle cx="1370" cy="1055.5" r="12" fill="url(#gsun)"/><circle cx="1378.5" cy="1046.5" r="6.8" fill="#d8232a"/><path d="M1524.5 1059.5 L1532 1051.5 L1539.5 1059.5" fill="none" stroke="#f0f0f0" stroke-width="1.5"/><rect x="1557.7" y="1045.5" width="7.6" height="13" rx="3.6" fill="#f0f0f0"/><path d="M1555.3 1054.5 Q1555.3 1061 1561.5 1061 Q1567.7 1061 1567.7 1054.5 M1561.5 1061 V1064.6 M1557.5 1064.6 H1565.5" fill="none" stroke="#f0f0f0" stroke-width="1.3"/><path d="M1585.5 1050.5 H1601.5 V1060.5 H1585.5Z" fill="none" stroke="#f0f0f0" stroke-width="1.3"/><rect x="1587.3" y="1052.3" width="9" height="6.4" fill="#f0f0f0"/><path d="M1584 1046.5 V1050 M1587.6 1046.5 V1050 M1582.6 1050 H1589 V1052.6 Q1589 1054.6 1585.8 1054.6 Q1582.6 1054.6 1582.6 1052.6Z" fill="#f0f0f0" stroke="#f0f0f0" stroke-width="0.9"/><path d="M1615 1063 A15.5 15.5 0 0 1 1630.5 1047.5" fill="none" stroke="#f0f0f0" stroke-width="1.4"/><path d="M1619.6 1063 A11 11 0 0 1 1630.5 1052" fill="none" stroke="#f0f0f0" stroke-width="1.4"/><path d="M1624 1063 A6.6 6.6 0 0 1 1630.5 1056.4" fill="none" stroke="#f0f0f0" stroke-width="1.4"/><circle cx="1629" cy="1061.6" r="1.9" fill="#f0f0f0"/><path d="M1642 1052 H1645.6 L1650.4 1047.4 V1064 L1645.6 1059.4 H1642Z" fill="none" stroke="#f0f0f0" stroke-width="1.2"/><path d="M1653.4 1052.4 Q1655.4 1055.7 1653.4 1059 M1656.6 1049.6 Q1660 1055.7 1656.6 1061.8 M1659.8 1047 Q1664.6 1055.7 1659.8 1064.4" fill="none" stroke="#f0f0f0" stroke-width="1.2"/><path d="M1819.5 1046 H1838.5 V1060.3 H1832 L1829 1063.6 L1826 1060.3 H1819.5Z" fill="none" stroke="#f0f0f0" stroke-width="1.4"/><path d="M1872 1041 Q1879 1038 1884 1042 Q1891 1045 1891 1052 Q1891 1058 1885 1060 Q1879 1064 1872 1061 Q1866 1057 1866 1051 Q1866 1044 1872 1041Z" fill="url(#gcop)"/><rect x="1869.5" y="1058" width="19" height="9.5" rx="2" fill="#f5c51f"/><rect x="1914.3" y="1030" width="1" height="50" fill="#6a6a66"/></svg>
<span id="t95" class="t" style="left:1003.6px;top:1045px;font-size:19px;color:#fff;font-weight:bold;">S</span>
<span id="t96" class="t" style="left:1013.8px;top:1056px;font-size:13px;color:#fff;font-weight:bold;">2</span>
<span id="t97" class="t" style="left:1060.3px;top:1043px;font-size:21.5px;color:#1a55c0;font-weight:bold;letter-spacing:-1.297px;">W</span>
<span id="t98" class="t" style="left:1376.2px;top:1041px;font-size:11px;color:#fff;">1</span>
<span id="t99" class="t" style="left:1871.2px;top:1060px;font-size:7.6px;color:#1a1a1a;font-weight:bold;letter-spacing:-0.008px;">PRE</span>
<span id="t100" class="t" style="left:1396.8px;top:1046px;font-size:19px;color:#ececec;letter-spacing:-0.990px;">34°C  Sunny</span>
<span id="t101" class="t" style="left:1675.3px;top:1048px;font-size:15.5px;color:#ececec;letter-spacing:-1.531px;">ENG</span>
<span id="t102" class="t" style="left:1741px;top:1036px;font-size:15.5px;color:#ececec;letter-spacing:-1.059px;">13:33</span>
<span id="t103" class="t" style="left:1720px;top:1059px;font-size:15.5px;color:#ececec;letter-spacing:-0.380px;">09-10-2024</span>
</div>
</body></html>
